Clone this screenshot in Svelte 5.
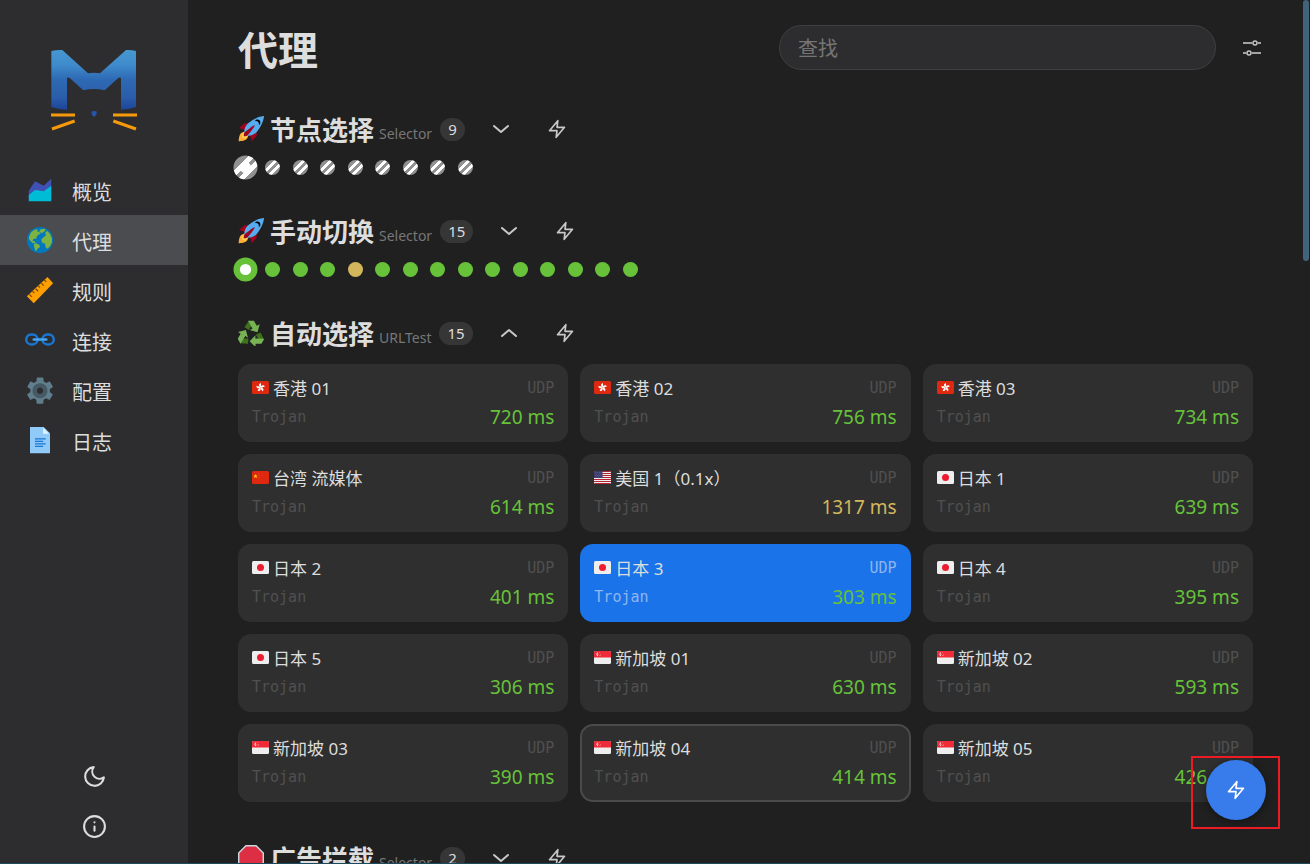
<script>
    let keyword = $state('');
    let active = $state('代理');
    let selected = $state('日本 3');

    const menus = [
        { name: '概览', icon: 'chart' },
        { name: '代理', icon: 'globe' },
        { name: '规则', icon: 'ruler' },
        { name: '连接', icon: 'link' },
        { name: '配置', icon: 'gear' },
        { name: '日志', icon: 'doc' }
    ];

    const proxies = [
        { flag: 'hk', name: '香港 01', delay: 720 },
        { flag: 'hk', name: '香港 02', delay: 756 },
        { flag: 'hk', name: '香港 03', delay: 734 },
        { flag: 'cn', name: '台湾 流媒体', delay: 614 },
        { flag: 'us', name: '美国 1（0.1x）', delay: 1317 },
        { flag: 'jp', name: '日本 1', delay: 639 },
        { flag: 'jp', name: '日本 2', delay: 401 },
        { flag: 'jp', name: '日本 3', delay: 303 },
        { flag: 'jp', name: '日本 4', delay: 395 },
        { flag: 'jp', name: '日本 5', delay: 306 },
        { flag: 'sg', name: '新加坡 01', delay: 630 },
        { flag: 'sg', name: '新加坡 02', delay: 593 },
        { flag: 'sg', name: '新加坡 03', delay: 390 },
        { flag: 'sg', name: '新加坡 04', delay: 414, focused: true },
        { flag: 'sg', name: '新加坡 05', delay: 426 }
    ];

    const green = Array(15).fill('good');
    green[4] = 'slow';

    let groups = $state([
        { icon: 'rocket', name: '节点选择', type: 'Selector', count: 9, open: false, dots: Array(9).fill('none') },
        { icon: 'rocket', name: '手动切换', type: 'Selector', count: 15, open: false, dots: green },
        { icon: 'recycle', name: '自动选择', type: 'URLTest', count: 15, open: true, dots: green },
        { icon: 'stop', name: '广告拦截', type: 'Selector', count: 2, open: false, dots: Array(2).fill('none') }
    ]);
</script>

{#snippet bolt(size)}
    <svg width={size} height={size} viewBox="0 0 24 24" fill="none" stroke="currentColor" stroke-width="2" stroke-linecap="round" stroke-linejoin="round">
        <polygon points="13 2 3 14 12 14 11 22 21 10 12 10 13 2" />
    </svg>
{/snippet}

{#snippet menuIcon(icon)}
    <svg width="30" height="30" viewBox="0 0 48 48">
        {#if icon === 'chart'}
            <polygon fill="#3f51b5" points="42,37 6,37 6,25 16,10 30,17 42,6" />
            <polygon fill="#00bcd4" points="42,42 6,42 6,32 16,24 30,26 42,17" />
        {:else if icon === 'globe'}
            <circle cx="24" cy="24" r="21" fill="#0277bd" />
            <g fill="#7cb342">
                <path d="M7 17L10 11L16 7L21 7L19 10L23 11L25 14L22 15L19 18L18 22L14 22L12 25L15 26L18 29L13 29L9 26L6 22z" />
                <path d="M14 31L18 29L23 32L24 35L20 38L18 42L16 40L15 36z" />
                <path d="M24 7L31 6L33 8L30 11L26 13L23 10z" />
                <path d="M35 9L40 14L43 21L43 28L40 34L36 38L33 36L32 30L27 28L26 23L30 19L34 16L32 13z" />
            </g>
        {:else if icon === 'ruler'}
            <polygon fill="#ffa000" points="3,34 36,3 45,13 14,45" />
            <path d="M7 31l4 4M12 26l3 3M17 22l4 4M21 17l3 3M26 13l4 4M31 8l3 3" stroke="#7a4a08" stroke-width="2" fill="none" />
        {:else if icon === 'link'}
            <g fill="none" stroke="#1976d2" stroke-width="4">
                <rect x="2" y="15" width="18" height="16" rx="8" />
                <rect x="28" y="15" width="18" height="16" rx="8" />
            </g>
            <path d="M14 23h20" stroke="#42a5f5" stroke-width="4" stroke-linecap="round" />
        {:else if icon === 'gear'}
            <path fill="#607d8b" d="M39.6,27.2c0.1-0.7,0.2-1.4,0.2-2.2s-0.1-1.5-0.2-2.2l4.5-3.2c0.4-0.3,0.6-0.9,0.3-1.4L40,10.8c-0.3-0.5-0.8-0.7-1.3-0.4l-5,2.3c-1.2-0.9-2.4-1.6-3.8-2.2l-0.5-5.5c-0.1-0.5-0.5-0.9-1-0.9h-8.6c-0.5,0-1,0.4-1,0.9l-0.5,5.5c-1.4,0.6-2.7,1.3-3.8,2.2l-5-2.3c-0.5-0.2-1.1,0-1.3,0.4l-4.3,7.4c-0.3,0.5-0.1,1.1,0.3,1.4l4.5,3.2c-0.1,0.7-0.2,1.4-0.2,2.2s0.1,1.5,0.2,2.2L4,30.4c-0.4,0.3-0.6,0.9-0.3,1.4L8,39.2c0.3,0.5,0.8,0.7,1.3,0.4l5-2.3c1.2,0.9,2.4,1.6,3.8,2.2l0.5,5.5c0.1,0.5,0.5,0.9,1,0.9h8.6c0.5,0,1-0.4,1-0.9l0.5-5.5c1.4-0.6,2.7-1.3,3.8-2.2l5,2.3c0.5,0.2,1.1,0,1.3-0.4l4.3-7.4c0.3-0.5,0.1-1.1-0.3-1.4L39.6,27.2z M24,35c-5.5,0-10-4.5-10-10c0-5.5,4.5-10,10-10c5.5,0,10,4.5,10,10C34,30.5,29.5,35,24,35z" />
            <path fill="#455a64" d="M24,13c-6.6,0-12,5.4-12,12c0,6.6,5.4,12,12,12s12-5.4,12-12C36,18.4,30.6,13,24,13z M24,30c-2.8,0-5-2.2-5-5c0-2.8,2.2-5,5-5s5,2.2,5,5C29,27.8,26.8,30,24,30z" />
        {:else}
            <polygon fill="#90caf9" points="40,45 8,45 8,3 30,3 40,13" />
            <polygon fill="#e1f5fe" points="38.5,14 29,14 29,4.5" />
            <path fill="#1976d2" d="M16 21h17v2H16zM16 25h13v2H16zM16 29h17v2H16zM16 33h13v2H16z" />
        {/if}
    </svg>
{/snippet}

{#snippet groupIcon(icon)}
    <svg width="26" height="26" viewBox="0 0 36 36">
        {#if icon === 'rocket'}
            <path fill="#a0041e" d="M1 17l8-7 16 1 1 16-7 8s.001-5.999-6-12-12-6-12-6z" />
            <path fill="#ffac33" d="M.973 35s-.036-7.979 2.985-11S15 21.187 15 21.187 14.999 29 11.999 32c-3 3-11.026 3-11.026 3z" />
            <circle fill="#ffcc4d" cx="9" cy="27" r="4" />
            <path fill="#55acee" d="M35.999 0s-10 0-22 10c-6 5-6 14-4 16s11 2 16-4c10-12 10-22 10-22z" />
            <path d="M26.999 5c-1.623 0-3.013.971-3.641 2.36.502-.227 1.055-.36 1.641-.36 2.209 0 4 1.791 4 4 0 .586-.133 1.139-.359 1.64 1.389-.627 2.359-2.017 2.359-3.64 0-2.209-1.791-4-4-4z" />
            <path fill="#a0041e" d="M8 28s0-4 1-5 13.001-10.999 14-10-9.001 13-10.001 14S8 28 8 28z" />
        {:else if icon === 'recycle'}
            {#each [0, 120, 240] as angle}
                <g transform="rotate({angle} 18 20)">
                    <path fill="#3e721d" d="M15 1L9 10L15 14L19 7z" />
                    <path fill="#77b255" d="M14 1H22L26 8L30 6L27 17L16 14L20 12z" />
                </g>
            {/each}
        {:else}
            <polygon fill="#dd2e44" stroke="#ccd6dd" stroke-width="2" points="11,1 25,1 35,11 35,25 25,35 11,35 1,25 1,11" />
        {/if}
    </svg>
{/snippet}

{#snippet flagIcon(flag)}
    <svg width="17" height="13" viewBox="0 0 34 26">
        {#if flag === 'hk'}
            <rect width="34" height="26" rx="3" fill="#de2910" />
            {#each [0, 72, 144, 216, 288] as angle}
                <path fill="#fff" d="M17 13C12 9 14 5 18 4C17 7 20 9 17 13z" transform="rotate({angle} 17 13)" />
            {/each}
        {:else if flag === 'cn'}
            <rect width="34" height="26" rx="3" fill="#de2910" />
            <polygon fill="#ffde02" points="7,6 8,9 11,9 9,11 10,14 7,12 4,14 5,11 3,9 6,9" />
            <path fill="#f5a80c" d="M12 5h1v1h-1zM14 8h1v1h-1zM14 12h1v1h-1zM12 15h1v1h-1z" />
        {:else if flag === 'us'}
            <rect width="34" height="26" rx="3" fill="#eee" />
            <path fill="#b22334" d="M2 0h30l2 2H0zM0 4h34v2H0zM0 8h34v2H0zM0 12h34v2H0zM0 16h34v2H0zM0 20h34v2H0zM0 24h34l-2 2H2z" />
            <path fill="#3c3b6e" d="M0 2l2-2h15v14H0z" />
            <path stroke="#aaaacb" stroke-dasharray="1 3" d="M2 3h14M4 6h12M2 9h14M4 12h12" />
        {:else if flag === 'jp'}
            <rect width="34" height="26" rx="3" fill="#eee" />
            <circle cx="17" cy="13" r="7" fill="#ed1b2f" />
        {:else}
            <rect width="34" height="26" rx="3" fill="#eee" />
            <path fill="#ef2b37" d="M0 13V3a3 3 0 0 1 3-3h28a3 3 0 0 1 3 3v10z" />
            <path fill="none" stroke="#fff" stroke-width="2" d="M8 3a4 4 0 0 0 0 7" />
            <path fill="#fff" d="M11 3h1v1h-1zM9 6h1v1H9zM13 6h1v1h-1zM10 9h1v1h-1zM13 9h1v1h-1z" />
        {/if}
    </svg>
{/snippet}

<div class="app">
    <aside>
        <svg class="logo" width="88" height="83" viewBox="150 84 264 249">
            <defs>
                <linearGradient id="fur" x1="0" y1="0" x2="0" y2="1">
                    <stop offset="0" stop-color="#4698d0" />
                    <stop offset="0.25" stop-color="#3f8bcb" />
                    <stop offset="0.5" stop-color="#2e69b4" />
                    <stop offset="0.8" stop-color="#2a5dab" />
                    <stop offset="1" stop-color="#1d4499" />
                </linearGradient>
            </defs>
            <path fill="url(#fur)" d="M154 93Q170 89 187 90L264 160Q282 157 300 160L378 90Q394 89 408 93V261Q386 269 363 269V175Q359 170 354 175L314 211Q282 203 250 211L210 175Q203 170 201 175V269Q177 269 154 261z" />
            <path fill="#2456a6" d="M274 275Q282 271 291 275Q291 285 282 291Q274 285 274 275z" />
            <path stroke="#f59a0b" stroke-width="9" d="M153 285H225M339 285H411M156 327L224 303M408 327L340 303" />
        </svg>
        <nav>
            {#each menus as menu}
                <a href="#{menu.icon}" class:active={menu.name === active} onclick={() => (active = menu.name)}>
                    {@render menuIcon(menu.icon)}
                    <span>{menu.name}</span>
                </a>
            {/each}
        </nav>
        <div class="footer">
            <button aria-label="切换主题">
                <svg width="25" height="25" viewBox="0 0 24 24" fill="none" stroke="currentColor" stroke-width="2" stroke-linecap="round" stroke-linejoin="round">
                    <path d="M21 12.79A9 9 0 1 1 11.21 3 7 7 0 0 0 21 12.79z" />
                </svg>
            </button>
            <button aria-label="关于">
                <svg width="25" height="25" viewBox="0 0 24 24" fill="none" stroke="currentColor" stroke-width="2" stroke-linecap="round">
                    <circle cx="12" cy="12" r="10" />
                    <path d="M12 16v-4M12 8v0" />
                </svg>
            </button>
        </div>
    </aside>

    <main>
        <header>
            <h1>代理</h1>
            <input type="text" placeholder="查找" aria-label="查找" bind:value={keyword} />
            <button class="settings" aria-label="设置">
                <svg width="18" height="18" viewBox="0 0 18 18" fill="none" stroke="currentColor">
                    <path d="M0 4h9M15 4h3M0 14h3M9 14h9" stroke-width="2" opacity="0.8" />
                    <circle cx="12" cy="4" r="2" stroke-width="1.5" />
                    <circle cx="6" cy="14" r="2" stroke-width="1.5" />
                </svg>
            </button>
        </header>

        {#each groups as group}
            <section>
                <div class="title">
                    {@render groupIcon(group.icon)}
                    <h2>{group.name}</h2>
                    <span class="type">{group.type}</span>
                    <span class="count">{group.count}</span>
                    <button aria-label="展开" aria-expanded={group.open} onclick={() => (group.open = !group.open)}>
                        <svg class:up={group.open} width="20" height="20" viewBox="0 0 20 20" fill="none" stroke="currentColor" stroke-width="2" stroke-linecap="round" stroke-linejoin="round">
                            <path d="M3 7l7 6 7-6" />
                        </svg>
                    </button>
                    <button aria-label="测速">{@render bolt(20)}</button>
                </div>
                {#if group.open}
                    <div class="cards">
                        {#each proxies as proxy}
                            <button
                                class="card"
                                class:selected={proxy.name === selected}
                                class:focused={proxy.focused}
                                onclick={() => (selected = proxy.name)}
                            >
                                <span class="row">
                                    <span class="name">{@render flagIcon(proxy.flag)}{proxy.name}</span>
                                    <span class="mono">UDP</span>
                                </span>
                                <span class="row">
                                    <span class="mono">Trojan</span>
                                    <span class="delay" class:late={proxy.delay > 1000}>{proxy.delay} ms</span>
                                </span>
                            </button>
                        {/each}
                    </div>
                {:else}
                    <div class="dots">
                        {#each group.dots as dot, i}
                            <span class="dot {dot}" class:now={i === 0}></span>
                        {/each}
                    </div>
                {/if}
            </section>
        {/each}
    </main>

    <div class="scrollbar"></div>
    <button class="fab" aria-label="全部测速">{@render bolt(20)}</button>
    <div class="mark"></div>
</div>

<style>
    :global(body) {
        background-color: #202020;
    }
    .app {
        position: relative;
        display: flex;
        height: 100vh;
        box-sizing: border-box;
        overflow: hidden;
        border-bottom: 1px solid #1d4a5c;
        background-color: #202020;
        color: #ddd;
        font-family: "Noto Sans", "Noto Sans CJK SC", sans-serif;
    }
    button {
        display: flex;
        align-items: center;
        justify-content: center;
        padding: 0;
        border: none;
        background: none;
        color: inherit;
        font-family: inherit;
        cursor: pointer;
    }
    aside {
        flex: none;
        width: 188px;
        display: flex;
        flex-direction: column;
        background-color: #2d2d30;
    }
    .logo {
        align-self: center;
        margin: 48px 0 34px;
    }
    nav a {
        display: flex;
        align-items: center;
        gap: 17px;
        height: 50px;
        padding-left: 25px;
        color: #ddd;
        font-size: 20px;
        text-decoration: none;
    }
    nav span {
        padding-top: 2px;
    }
    nav a.active {
        background-color: #4b4c4f;
    }
    .footer {
        display: flex;
        flex-direction: column;
        align-items: center;
        margin-top: auto;
        margin-bottom: 12px;
    }
    .footer button {
        width: 50px;
        height: 50px;
    }
    main {
        flex: 1;
        min-width: 0;
        overflow: hidden;
    }
    header {
        display: flex;
        align-items: center;
        gap: 18px;
        padding: 25px 40px 39px 50px;
    }
    h1 {
        flex: 1;
        margin: 0;
        padding-top: 4px;
        font-size: 40px;
        line-height: 41px;
    }
    header input {
        flex: 0 1 437px;
        min-width: 0;
        height: 45px;
        box-sizing: border-box;
        padding: 2px 18px 0;
        border: 1px solid #3f3f3f;
        border-radius: 23px;
        outline: none;
        background-color: #2d2d30;
        color: #ddd;
        font-family: inherit;
        font-size: 20px;
    }
    header input::placeholder {
        color: #757575;
    }
    .settings {
        width: 36px;
        height: 36px;
        color: #c4c4c4;
    }
    section {
        margin-bottom: 36px;
        padding: 0 57px 0 50px;
    }
    .title {
        display: flex;
        align-items: center;
        height: 40px;
        margin-bottom: 11px;
    }
    h2 {
        margin: 0 5px 0 6px;
        padding-top: 2px;
        font-size: 26px;
        line-height: 38px;
    }
    .type {
        padding-top: 8px;
        color: #777;
        font-size: 14px;
    }
    .count {
        margin: 0 8px;
        padding: 0 8px;
        border-radius: 12px;
        background-color: #363636;
        font-size: 15px;
        line-height: 23px;
    }
    .title button {
        width: 56px;
        height: 40px;
        color: #c8c8c8;
    }
    .up {
        transform: rotate(180deg);
    }
    .dots {
        display: flex;
        gap: 12px;
    }
    .dot {
        width: 15px;
        height: 15px;
        border-radius: 50%;
    }
    .dot:nth-child(odd) {
        margin-left: 1px;
    }
    .dot:first-child {
        margin-left: 0;
    }
    .good {
        background-color: #67c23a;
    }
    .slow {
        background-color: #d4b75c;
    }
    .none {
        background: linear-gradient(135deg, #919191 32%, #fff 32% 46%, #919191 46% 58%, #fff 58% 72%, #919191 72%);
    }
    .now {
        display: flex;
        align-items: center;
        justify-content: center;
        transform: scale(1.6);
    }
    .now::before {
        content: "";
        width: 7px;
        height: 7px;
        border-radius: 50%;
        background-color: #fff;
    }
    .cards {
        display: grid;
        grid-template-columns: repeat(3, 1fr);
        gap: 12px;
    }
    .card {
        flex-direction: column;
        align-items: stretch;
        height: 78px;
        padding: 0 14px 2px;
        border-radius: 13px;
        background-color: #2f2f2f;
    }
    .card.selected {
        background-color: #1a73e8;
    }
    .card.focused {
        padding: 0 12px 2px;
        border: 2px solid #4a4a4a;
    }
    .row {
        display: flex;
        align-items: center;
        justify-content: space-between;
        height: 29px;
    }
    .name {
        display: flex;
        align-items: center;
        gap: 4px;
        font-size: 17px;
    }
    .mono {
        color: #505050;
        font-family: "DejaVu Sans Mono", monospace;
        font-size: 15px;
    }
    .selected .mono {
        color: #8fb6ee;
    }
    .delay {
        color: #67c23a;
        font-size: 19px;
    }
    .late {
        color: #d4b75c;
    }
    .scrollbar {
        position: absolute;
        top: 0;
        right: 1px;
        width: 6px;
        height: 261px;
        border-radius: 3px;
        background-color: #41637c;
    }
    .fab {
        position: absolute;
        right: 44px;
        bottom: 43px;
        width: 60px;
        height: 60px;
        border-radius: 50%;
        background-color: #387cec;
        color: #fff;
        box-shadow: 0 2px 8px rgba(0, 0, 0, 0.4);
    }
    .mark {
        position: absolute;
        right: 30px;
        bottom: 34px;
        width: 89px;
        height: 73px;
        box-sizing: border-box;
        border: 2px solid #ed1c24;
        pointer-events: none;
    }
</style>
